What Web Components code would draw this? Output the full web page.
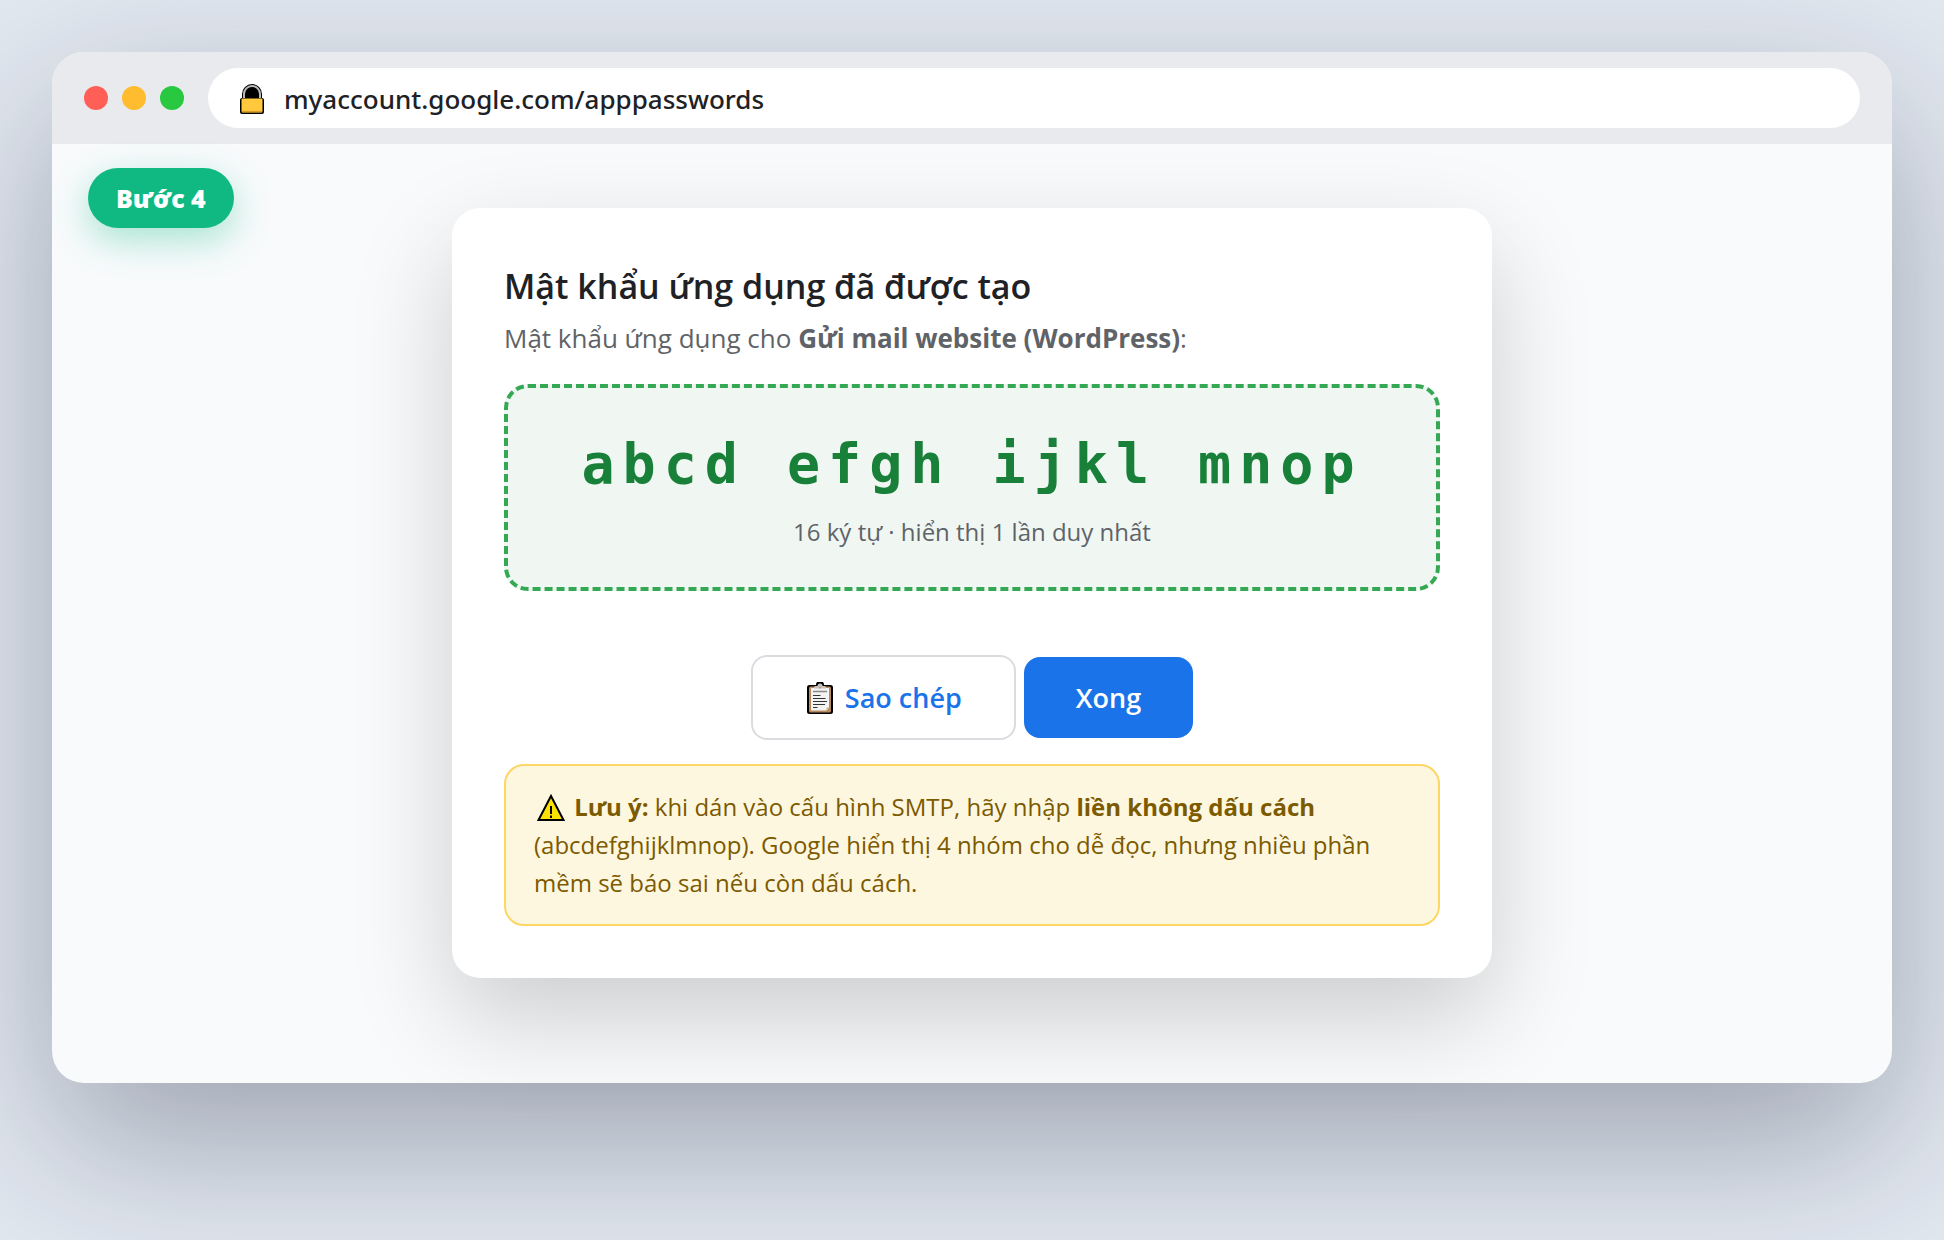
<!DOCTYPE html>
<html lang="vi">
<head>
<meta charset="utf-8">
<meta name="viewport" content="width=device-width, initial-scale=1">
<title>Mật khẩu ứng dụng</title>
<style>
  html { background: #e2e8f0; }
  body {
    margin: 0;
    padding: 52px;
    box-sizing: border-box;
    min-height: 100vh;
    font-family: "Open Sans", "Noto Sans", sans-serif;
    font-size: 24px;
    color: #202124;
  }
</style>
</head>
<body>
<browser-window url="myaccount.google.com/apppasswords">
  <step-badge slot="badge">Bước 4</step-badge>
  <password-card>
    <span slot="title">Mật khẩu ứng dụng đã được tạo</span>
    <span slot="subtitle">Mật khẩu ứng dụng cho <b>Gửi mail website (WordPress)</b>:</span>
    <secret-code>
      abcd efgh ijkl mnop
      <span slot="hint">16 ký tự · hiển thị 1 lần duy nhất</span>
    </secret-code>
    <action-button slot="actions" variant="outline"><ui-icon slot="icon" name="clipboard"></ui-icon>Sao chép</action-button>
    <action-button slot="actions">Xong</action-button>
    <note-box slot="note"><ui-icon name="warning"></ui-icon> <b>Lưu ý:</b> khi dán vào cấu hình SMTP, hãy nhập <b>liền không dấu cách</b> (abcdefghijklmnop). Google hiển thị 4 nhóm cho dễ đọc, nhưng nhiều phần mềm sẽ báo sai nếu còn dấu cách.</note-box>
  </password-card>
</browser-window>

<script>
  const define = (name, html, setup) => {
    const template = document.createElement('template');
    template.innerHTML = html;
    customElements.define(name, class extends HTMLElement {
      constructor() {
        super();
        this.attachShadow({ mode: 'open' }).append(template.content.cloneNode(true));
      }
      connectedCallback() {
        if (setup) setup(this, this.shadowRoot);
      }
    });
  };

  const icons = {
    lock: `<svg width="26" height="32" viewBox="0 0 26 32">
      <path d="M3 15V11a10 10 0 0 1 20 0v4z" fill="#000"/>
      <path d="M5 16V11a8 8 0 0 1 16 0v5" fill="none" stroke="#b9bcbe" stroke-width="2"/>
      <path d="M7 16V11a6 6 0 0 1 12 0v5z" fill="#000"/>
      <rect x="1" y="15" width="24" height="16" rx="2" fill="#000"/>
      <rect x="2.500" y="15.500" width="21" height="14" rx="1" fill="#ffc83d"/>
      <path d="M3 28.600h20" stroke="#d99b26" stroke-width="1.400"/>
    </svg>`,
    clipboard: `<svg width="28" height="34" viewBox="0 0 28 34">
      <path d="M3.500 3H10a4 4 0 0 1 8 0h6.500A2.500 2.500 0 0 1 27 5.500v24a2.500 2.500 0 0 1-2.500 2.500h-21A2.500 2.500 0 0 1 1 29.500v-24A2.500 2.500 0 0 1 3.500 3z" fill="#000"/>
      <rect x="3" y="4.500" width="22" height="26" rx="1.500" fill="#b88b5e"/>
      <path d="M5 6h18v19.500L20.500 28.500H5z" fill="#f3f3f3"/>
      <path d="M20.500 28.500v-3H23z" fill="#d5b896"/>
      <path d="M8 6.500V5.500A1.500 1.500 0 0 1 9.500 4h2a2.500 2.500 0 0 1 5 0h2A1.500 1.500 0 0 1 20 5.500v1z" fill="#c4c4c4"/>
      <circle cx="14" cy="5.500" r="1" fill="#c79350"/>
      <path d="M7 9.500h14" stroke="#888" stroke-width="1.500"/>
      <path d="M7 13.500h7.500M7 16.500h12.500M7 19.500h14M7 22.500h12M7 25.500h4.500" stroke="#333" stroke-width="1.200"/>
    </svg>`,
    warning: `<svg width="32" height="30" viewBox="0 0 32 30">
      <path d="M16 3L28.500 27H3.500z" fill="#fce100" stroke="#000" stroke-width="2"/>
      <path d="M16 13v8M16 22.500v2.500" stroke="#000" stroke-width="2"/>
    </svg>`
  };

  define('ui-icon', `
    <style>
      :host { display: inline-block; margin: 2px 1px 0; vertical-align: -7px; line-height: 0; }
      svg { display: block; }
    </style>
    <span aria-hidden="true"></span>`,
    (host, root) => { root.querySelector('span').innerHTML = icons[host.getAttribute('name')]; });

  define('browser-window', `
    <style>
      :host {
        display: block;
        position: relative;
        border-radius: 32px;
        background: #f8fafc;
        box-shadow: 0 60px 160px rgba(15, 23, 42, .32);
      }
      header {
        display: flex;
        align-items: center;
        gap: 24px;
        padding: 16px 32px;
        background: #e8eaed;
        border-radius: 32px 32px 0 0;
      }
      .dots { display: flex; gap: 14px; }
      .dots i { width: 24px; height: 24px; border-radius: 50%; background: #ff5f57; }
      .dots i:nth-child(2) { background: #febc2e; }
      .dots i:nth-child(3) { background: #28c840; }
      label {
        flex: 1;
        display: flex;
        align-items: center;
        gap: 18px;
        height: 60px;
        padding: 0 30px;
        border-radius: 30px;
        box-sizing: border-box;
        background: #fff;
      }
      input {
        flex: 1;
        min-width: 0;
        padding: 2px 0 0;
        border: 0;
        outline: 0;
        background: none;
        color: #202124;
        font: 500 26px/36px "Noto Sans", "Open Sans", sans-serif;
      }
      .badge { position: absolute; top: 116px; left: 36px; }
      main { display: flex; justify-content: center; padding: 64px 52px 105px; }
    </style>
    <header>
      <div class="dots"><i></i><i></i><i></i></div>
      <label><ui-icon name="lock"></ui-icon><input type="text" aria-label="URL" spellcheck="false"></label>
    </header>
    <div class="badge"><slot name="badge"></slot></div>
    <main><slot></slot></main>`,
    (host, root) => { root.querySelector('input').value = host.getAttribute('url'); });

  define('step-badge', `
    <style>
      :host {
        display: block;
        padding: 12px 28px;
        border-radius: 30px;
        background: #10b981;
        box-shadow: 0 12px 36px rgba(16, 185, 129, .35);
        color: #fff;
        font-size: 25px;
        font-weight: 800;
        line-height: 36px;
      }
    </style>
    <slot></slot>`);

  define('password-card', `
    <style>
      :host {
        display: block;
        box-sizing: border-box;
        width: 100%;
        max-width: 1040px;
        padding: 52px;
        border-radius: 28px;
        background: #fff;
        box-shadow: 0 40px 100px rgba(0, 0, 0, .18);
      }
      h1 { margin: 0 0 6px; font-size: 34px; font-weight: 600; line-height: 52px; }
      p { margin: 0 0 26px; font-size: 26px; line-height: 40px; color: #5f6368; }
      .actions { display: flex; justify-content: center; align-items: center; gap: 8px; margin: 64px 0 24px; }
    </style>
    <h1><slot name="title"></slot></h1>
    <p><slot name="subtitle"></slot></p>
    <slot></slot>
    <div class="actions"><slot name="actions"></slot></div>
    <slot name="note"></slot>`);

  define('secret-code', `
    <style>
      :host {
        display: block;
        padding: 40px 32px 37px;
        border: 4px dashed #34a853;
        border-radius: 24px;
        background: #f0f7f3;
        text-align: center;
      }
      .code {
        color: #188038;
        font: 700 55px/72px "DejaVu Sans Mono", "Liberation Mono", monospace;
        letter-spacing: 8px;
      }
      .hint { margin-top: 14px; color: #5f6368; font-size: 24px; line-height: 36px; }
    </style>
    <div class="code"><slot></slot></div>
    <div class="hint"><slot name="hint"></slot></div>`);

  define('action-button', `
    <style>
      :host { display: block; }
      button {
        display: flex;
        align-items: center;
        gap: 10px;
        padding: 22px 52px;
        border: 0;
        border-radius: 16px;
        background: #1a73e8;
        color: #fff;
        font: 600 27px/37px "Open Sans", "Noto Sans", sans-serif;
      }
      :host([variant="outline"]) button {
        border: 2px solid #dadce0;
        background: #fff;
        color: #1a73e8;
      }
    </style>
    <button type="button"><slot name="icon"></slot><slot></slot></button>`);

  define('note-box', `
    <style>
      :host {
        display: block;
        padding: 22px 28px;
        border: 2px solid #fdd663;
        border-radius: 20px;
        background: #fef7e0;
        color: #7c5a00;
        font-size: 24px;
        line-height: 38px;
      }
    </style>
    <slot></slot>`);
</script>
</body>
</html>
